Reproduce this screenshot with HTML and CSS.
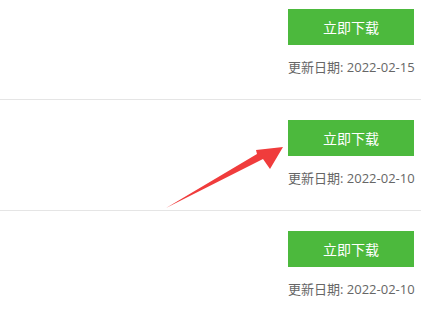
FILE: index.html
```html
<!DOCTYPE html>
<html lang="zh-CN">
<head>
  <meta charset="UTF-8">
  <meta name="viewport" content="width=device-width, initial-scale=1.0">
  <title>下载</title>
  <link rel="stylesheet" href="styles.css">
</head>
<body>
  <div class="list">
    <div class="item">
      <div class="action">
        <a class="btn" href="#">立即下载</a>
        <p class="date">更新日期: 2022-02-15</p>
      </div>
    </div>
    <div class="item">
      <div class="action">
        <a class="btn" href="#">立即下载</a>
        <p class="date">更新日期: 2022-02-10</p>
      </div>
    </div>
    <div class="item">
      <div class="action">
        <a class="btn" href="#">立即下载</a>
        <p class="date">更新日期: 2022-02-10</p>
      </div>
    </div>
  </div>

  <!-- red annotation arrow -->
  <svg class="arrow" width="448" height="309" viewBox="0 0 448 309">
    <polygon points="166,208 257,154 256,150 283,147 270,169 263,159" fill="#f03c3c"/>
  </svg>
</body>
</html>
```

FILE: styles.css
```css
body {
  margin: 0;
  background: #fff;
  font-family: "Noto Sans CJK SC", "Noto Sans", sans-serif;
  position: relative;
  overflow: hidden;
}

.list {
  width: 421px;
  margin-top: -11px;
}

.item {
  display: flex;
  justify-content: flex-end;
  padding: 20px 0 22px;
  border-bottom: 1px solid #e5e5e5;
}

.action {
  width: 133px;
}

.btn {
  display: block;
  width: 126px;
  height: 36px;
  line-height: 36px;
  background-color: #4cb93d;
  color: #fff;
  font-size: 14px;
  text-align: center;
  text-decoration: none;
}

.date {
  margin: 12px 0 0;
  line-height: 20px;
  font-family: "Open Sans", "Noto Sans CJK SC", sans-serif;
  font-size: 13px;
  color: #666;
  white-space: nowrap;
}

.arrow {
  position: absolute;
  left: 0;
  top: 0;
}
```
